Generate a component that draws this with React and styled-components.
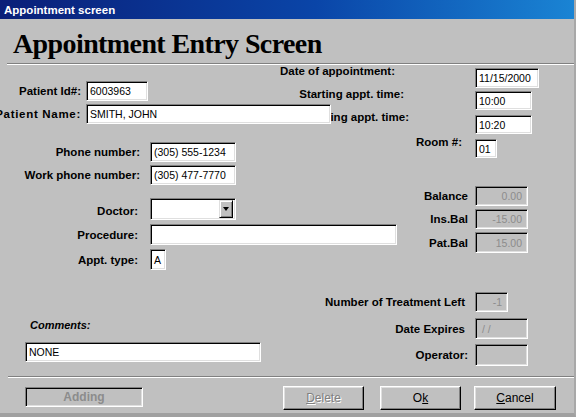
import styled, { createGlobalStyle } from "styled-components"

const GlobalStyle = createGlobalStyle`
    html, body {
        margin: 0;
        padding: 0;
        background: #c0c0c0;
    }
    body {
        font-family: "Liberation Sans", Arial, sans-serif;
    }
`

const Window = styled.div`
    width: 576px;
    height: 417px;
    box-sizing: border-box;
    overflow: hidden;
    background: #c0c0c0;
    display: flex;
    flex-direction: column;
    border-bottom: 4px solid #a0a0a0;
    border-right: 2px solid #a8a8a8;
`

const TitleBar = styled.div`
    height: 19px;
    flex-shrink: 0;
    display: flex;
    align-items: center;
    padding-left: 4px;
    background: linear-gradient(to right, #0a1f78 0%, #0a45a8 55%, #1a84d4 100%);
    color: #fff;
    font-weight: 700;
    font-size: 11.5px;
`

const Heading = styled.h1`
    margin: 9px 0 0 13px;
    font-family: "Liberation Serif", "Times New Roman", serif;
    font-weight: 700;
    font-size: 28px;
    line-height: 32px;
    letter-spacing: -0.6px;
    color: #000;
`

const Etched = styled.div`
    height: 0;
    margin: ${p => p.$mt || 0}px 0 0 ${p => p.$ml || 0}px;
    border-top: 1px solid #808080;
    border-bottom: 1px solid #fff;
`

const FormArea = styled.div`
    display: grid;
    & > * {
        grid-area: 1 / 1;
    }
`

const RightLayer = styled.div`
    justify-self: end;
    width: 300px;
    display: flex;
    flex-direction: column;
`

const LeftLayer = styled.div`
    display: flex;
    flex-direction: column;
    align-items: flex-start;
    z-index: 1;
`

const RightRow = styled.div`
    display: grid;
    grid-template-columns: 1fr 99px;
    align-items: center;
    margin-top: ${p => p.$mt}px;
`

const LeftRow = styled.div`
    display: grid;
    grid-template-columns: ${p => p.$label}px auto;
    column-gap: ${p => p.$gap}px;
    align-items: center;
    margin-top: ${p => p.$mt}px;
`

const Label = styled.div`
    display: flex;
    justify-content: flex-end;
    white-space: nowrap;
    font-weight: 700;
    font-size: 11.5px;
    line-height: 14px;
    letter-spacing: ${p => p.$spacing || 0}px;
    color: #000;
    padding-right: ${p => p.$gap || 0}px;
    align-self: ${p => (p.$top !== undefined ? "start" : "center")};
    margin-top: ${p => p.$top || 0}px;
`

const CommentsLabel = styled.div`
    margin: 48px 0 0 30px;
    font-weight: 700;
    font-style: italic;
    font-size: 11px;
    line-height: 14px;
`

const Field = styled.div`
    box-sizing: border-box;
    width: ${p => p.$w}px;
    height: ${p => p.$h || 20}px;
    margin: ${p => p.$m || "0"};
    display: flex;
    align-items: center;
    justify-content: ${p => (p.$right ? "flex-end" : "flex-start")};
    padding: 0 ${p => (p.$right ? 5 : 3)}px 0 ${p => p.$pl || 3}px;
    background: ${p => (p.$disabled ? "#c0c0c0" : "#fff")};
    border-style: solid;
    border-width: 1px;
    border-color: #808080 #fff #fff #808080;
    box-shadow: inset 1px 1px 0 #000, inset -1px -1px 0 #dfdfdf;
    font-size: 10.5px;
    color: ${p => (p.$disabled ? "#8c8c8c" : "#000")};
    white-space: nowrap;
    overflow: hidden;
`

const Combo = styled(Field)`
    padding-right: 2px;
    justify-content: space-between;
`

const DropButton = styled.div`
    box-sizing: border-box;
    width: 14px;
    height: 18px;
    margin-left: auto;
    display: flex;
    align-items: center;
    justify-content: center;
    background: #c0c0c0;
    border-style: solid;
    border-width: 1px;
    border-color: #dfdfdf #000 #000 #dfdfdf;
    box-shadow: inset 1px 1px 0 #fff, inset -1px -1px 0 #808080;

    &::after {
        content: "";
        width: 0;
        height: 0;
        border-left: 3.5px solid transparent;
        border-right: 3.5px solid transparent;
        border-top: 4px solid #000;
    }
`

const ButtonBar = styled.div`
    display: flex;
    align-items: flex-start;
    margin-top: 8px;
`

const StatusPanel = styled.div`
    box-sizing: border-box;
    width: 118px;
    height: 20px;
    margin: 1px 0 0 25px;
    display: flex;
    align-items: center;
    justify-content: center;
    border-style: solid;
    border-width: 1px;
    border-color: #808080 #fff #fff #808080;
    box-shadow: inset 1px 1px 0 #000, inset -1px -1px 0 #dfdfdf;
    font-weight: 700;
    font-size: 12px;
    color: #8c8c8c;
`

const Button = styled.button`
    box-sizing: border-box;
    width: ${p => p.$w}px;
    height: 24px;
    margin-left: ${p => p.$ml}px;
    padding: 0;
    background: #c0c0c0;
    border-style: solid;
    border-width: 1px;
    border-color: #fff #000 #000 #fff;
    box-shadow: inset -1px -1px 0 #808080, inset 1px 1px 0 #dfdfdf;
    font-family: "Liberation Sans", Arial, sans-serif;
    font-size: 12px;
    color: ${p => (p.disabled ? "#808080" : "#000")};
    text-shadow: ${p => (p.disabled ? "1px 1px 0 #fff" : "none")};

    u {
        text-decoration: underline;
    }
`

function App() {
    return (
        <>
            <GlobalStyle />
            <Window>
                <TitleBar>Appointment screen</TitleBar>
                <Heading>Appointment Entry Screen</Heading>
                <Etched $mt={3} $ml={7} />

                <FormArea>
                    <RightLayer>
                        <RightRow $mt={3}>
                            <Label $gap={80} $top={-4}>Date of appointment:</Label>
                            <Field $w={64}>11/15/2000</Field>
                        </RightRow>
                        <RightRow $mt={3}>
                            <Label $gap={71} $top={-4}>Starting appt. time:</Label>
                            <Field $w={57} $h={19}>10:00</Field>
                        </RightRow>
                        <RightRow $mt={5}>
                            <Label $gap={66} $top={-5}>Ending appt. time:</Label>
                            <Field $w={57} $h={19}>10:20</Field>
                        </RightRow>
                        <RightRow $mt={5}>
                            <Label $gap={13} $top={-4}>Room #:</Label>
                            <Field $w={22} $h={19}>01</Field>
                        </RightRow>

                        <RightRow $mt={28}>
                            <Label $gap={7}>Balance</Label>
                            <Field $w={53} $disabled $right>0.00</Field>
                        </RightRow>
                        <RightRow $mt={3}>
                            <Label $gap={7}>Ins.Bal</Label>
                            <Field $w={53} $disabled $right>-15.00</Field>
                        </RightRow>
                        <RightRow $mt={3}>
                            <Label $gap={7}>Pat.Bal</Label>
                            <Field $w={53} $h={21} $disabled $right>15.00</Field>
                        </RightRow>

                        <RightRow $mt={39}>
                            <Label $gap={10}>Number of Treatment Left</Label>
                            <Field $w={33} $disabled $right>-1</Field>
                        </RightRow>
                        <RightRow $mt={6}>
                            <Label $gap={10}>Date Expires</Label>
                            <Field $w={53} $h={21} $disabled $pl={6}>/ /</Field>
                        </RightRow>
                        <RightRow $mt={5}>
                            <Label $gap={7}>Operator:</Label>
                            <Field $w={53} $h={22} $disabled />
                        </RightRow>
                    </RightLayer>

                    <LeftLayer>
                        <LeftRow $mt={16} $label={81} $gap={5}>
                            <Label>Patient Id#:</Label>
                            <Field $w={62}>6003963</Field>
                        </LeftRow>
                        <LeftRow $mt={3} $label={81} $gap={5}>
                            <Label $spacing={0.7}>Patient Name:</Label>
                            <Field $w={245}>SMITH, JOHN</Field>
                        </LeftRow>

                        <LeftRow $mt={18} $label={140} $gap={10}>
                            <Label>Phone number:</Label>
                            <Field $w={86}>(305) 555-1234</Field>
                        </LeftRow>
                        <LeftRow $mt={3} $label={140} $gap={10}>
                            <Label>Work phone number:</Label>
                            <Field $w={86}>(305) 477-7770</Field>
                        </LeftRow>

                        <LeftRow $mt={13} $label={138} $gap={12}>
                            <Label $top={6}>Doctor:</Label>
                            <Combo $w={86} $h={22}>
                                <DropButton />
                            </Combo>
                        </LeftRow>
                        <LeftRow $mt={4} $label={138} $gap={12}>
                            <Label>Procedure:</Label>
                            <Field $w={247} $h={21} />
                        </LeftRow>
                        <LeftRow $mt={4} $label={138} $gap={12}>
                            <Label>Appt. type:</Label>
                            <Field $w={16} $h={21}>A</Field>
                        </LeftRow>

                        <CommentsLabel>Comments:</CommentsLabel>
                        <Field $w={236} $m="10px 0 0 25px">NONE</Field>
                    </LeftLayer>
                </FormArea>

                <Etched $mt={10} $ml={8} />

                <ButtonBar>
                    <StatusPanel>Adding</StatusPanel>
                    <Button $w={81} $ml={140} disabled>
                        <u>D</u>elete
                    </Button>
                    <Button $w={81} $ml={16}>
                        O<u>k</u>
                    </Button>
                    <Button $w={82} $ml={13}>
                        <u>C</u>ancel
                    </Button>
                </ButtonBar>
            </Window>
        </>
    )
}

export default App
